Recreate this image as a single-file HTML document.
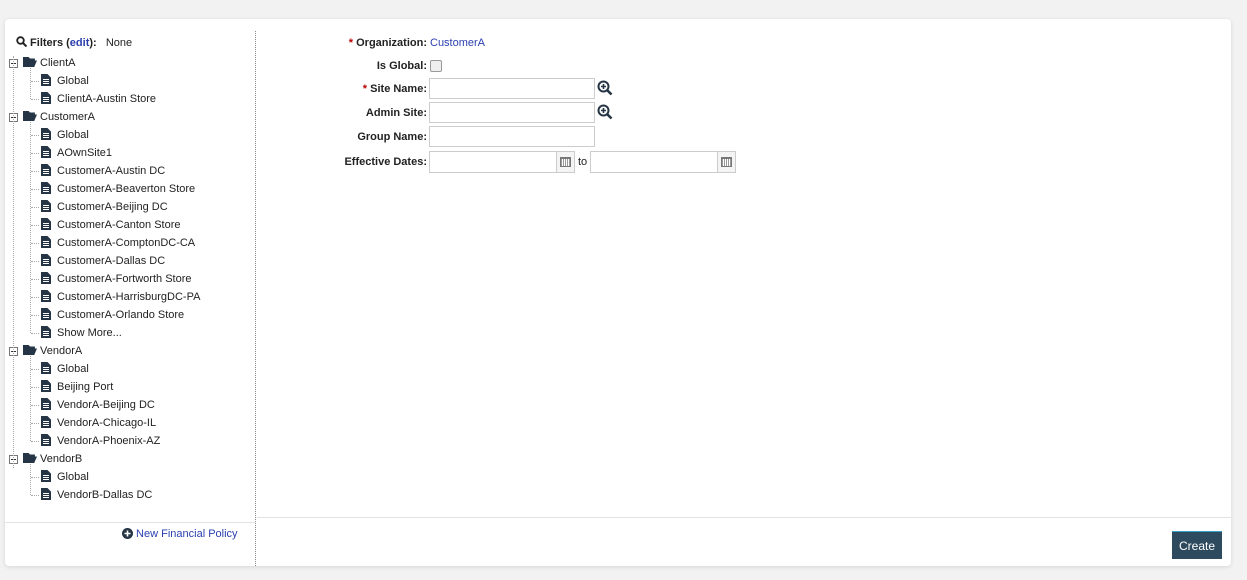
<!DOCTYPE html><html><head><style>
body{margin:0;background:#f2f2f2;font-family:"Liberation Sans",sans-serif;font-size:11px;color:#222;}
.card{position:absolute;left:5px;top:19px;width:1226px;height:547px;background:#fff;border-radius:4px;box-shadow:0 1px 4px rgba(0,0,0,.12);}
.a{position:absolute;white-space:nowrap;}
.div{position:absolute;left:250px;top:12px;height:535px;border-left:1px dotted #888;}
.row{position:absolute;height:18px;line-height:18px;white-space:nowrap;}
.vl{position:absolute;border-left:1px dotted #aaa;}
.hl{position:absolute;border-top:1px dotted #aaa;width:8px;}
.doc{display:inline-block;width:10px;height:12px;background:#263545;vertical-align:-2px;margin-right:6px;clip-path:polygon(0 0,65% 0,100% 30%,100% 100%,0 100%);position:relative}
.doc:after{content:"";position:absolute;left:2px;top:5px;width:6px;height:5px;background:repeating-linear-gradient(#fff 0 1px,transparent 1px 2px)}
.fold{display:inline-block;width:14px;height:10px;background:#263545;vertical-align:-1px;margin-right:3px;clip-path:polygon(0 0,40% 0,50% 15%,85% 15%,85% 35%,100% 35%,80% 100%,0 100%)}
.box{display:inline-block;width:7px;height:7px;border:1px solid #777;position:absolute;left:4px;top:5px;background:#fff}
.box:after{content:"";position:absolute;left:1px;top:3px;width:5px;height:1px;background:#333}
.lbl{position:absolute;right:804px;font-weight:bold;white-space:nowrap;text-align:right}
.in{position:absolute;left:424px;width:164px;height:19px;border:1px solid #ccc;}
.star{color:#b00;}
.cal{position:absolute;width:17px;height:20px;border-left:1px solid #ccc;background:#f4f4f4;top:0;right:0}
.cal:after{content:"";position:absolute;left:3px;top:5px;width:11px;height:10px;border:1px solid #777;border-top-width:2px;background:repeating-linear-gradient(90deg,#999 0 1px,transparent 1px 2px),#fff;box-sizing:border-box}
</style></head><body>
<div class="card">
<div class="div"></div>
<div class="a" style="left:11px;top:17px;font-weight:bold"><svg width="11" height="11" style="vertical-align:-1px"><circle cx="4.5" cy="4.5" r="3.3" stroke="#222" stroke-width="1.8" fill="none"/><line x1="7" y1="7" x2="10.5" y2="10.5" stroke="#222" stroke-width="2"/></svg> Filters (<span style="color:#2a3fb0">edit</span>):&nbsp;&nbsp; <span style="font-weight:normal">None</span></div>
<div id="tree"></div>
<div class="a" style="left:0;top:503px;width:250px;border-top:1px solid #e3e3e3"></div>
<div class="a" style="left:252px;top:498px;width:974px;border-top:1px solid #e3e3e3"></div>
<div class="a" style="left:117px;top:509px;color:#2a3fb0"><svg width="11" height="11" style="vertical-align:-2px"><circle cx="5.5" cy="5.5" r="5.5" fill="#263545"/><path d="M5.5 2.5v6M2.5 5.5h6" stroke="#fff" stroke-width="1.6"/></svg> New Financial Policy</div>
<div class="lbl" style="top:18px"><span class="star">*</span> Organization: <span style="font-weight:normal;color:#2a3fb0;position:absolute;left:100%;margin-left:3px">CustomerA</span></div>
<div class="lbl" style="top:41px">Is Global:</div>
<div class="a" style="left:425px;top:41px;width:10px;height:10px;border:1px solid #999;border-radius:2px;background:#eee"></div>
<div class="lbl" style="top:64px"><span class="star">*</span> Site Name:</div><div class="in" style="top:59px"></div>
<div class="lbl" style="top:88px">Admin Site:</div><div class="in" style="top:83px"></div>
<div class="lbl" style="top:112px">Group Name:</div><div class="in" style="top:107px"></div>
<div class="lbl" style="top:137px">Effective Dates:</div>
<div class="in" style="top:132px;width:144px;height:20px"><div class="cal"></div></div>
<div class="a" style="left:573px;top:137px">to</div>
<div class="in" style="top:132px;left:585px;width:144px;height:20px"><div class="cal"></div></div>
<svg class="a" style="left:592px;top:61px" width="16" height="16"><circle cx="6.5" cy="6.5" r="5" stroke="#263545" stroke-width="2" fill="none"/><path d="M6.5 4v5M4 6.5h5" stroke="#263545" stroke-width="1.6"/><line x1="10" y1="10" x2="14.5" y2="14.5" stroke="#263545" stroke-width="2.6"/></svg>
<svg class="a" style="left:592px;top:85px" width="16" height="16"><circle cx="6.5" cy="6.5" r="5" stroke="#263545" stroke-width="2" fill="none"/><path d="M6.5 4v5M4 6.5h5" stroke="#263545" stroke-width="1.6"/><line x1="10" y1="10" x2="14.5" y2="14.5" stroke="#263545" stroke-width="2.6"/></svg>
<div class="a" style="left:1167px;top:512px;width:50px;height:27px;background:#2e4a5e;border-top:1px solid #3aa0c8;color:#fff;font-size:12px;text-align:center;line-height:28px">Create</div>
</div>
<script>
var g=[["ClientA",["Global","ClientA-Austin Store"]],["CustomerA",["Global","AOwnSite1","CustomerA-Austin DC","CustomerA-Beaverton Store","CustomerA-Beijing DC","CustomerA-Canton Store","CustomerA-ComptonDC-CA","CustomerA-Dallas DC","CustomerA-Fortworth Store","CustomerA-HarrisburgDC-PA","CustomerA-Orlando Store","Show More..."]],["VendorA",["Global","Beijing Port","VendorA-Beijing DC","VendorA-Chicago-IL","VendorA-Phoenix-AZ"]],["VendorB",["Global","VendorB-Dallas DC"]]];
var h="",y=35,first=y;
g.forEach(function(o,i){var fy=y;h+='<div class="row" style="left:0;top:'+y+'px;width:240px"><span class="box" style="left:4px"></span><span style="position:absolute;left:18px"><span class="fold"></span>'+o[0]+'</span></div>';y+=18;
o[1].forEach(function(c){h+='<div class="hl" style="left:26px;top:'+(y+9)+'px"></div><div class="row" style="left:36px;top:'+y+'px"><span class="doc"></span>'+c+'</div>';y+=18;});
h+='<div class="vl" style="left:25px;top:'+(fy+14)+'px;height:'+(y-fy-23)+'px"></div>';});
h+='<div class="vl" style="left:8px;top:'+(first+2)+'px;height:'+(y-first-38)+'px"></div>';
document.getElementById("tree").innerHTML=h;
</script>
</body></html>
